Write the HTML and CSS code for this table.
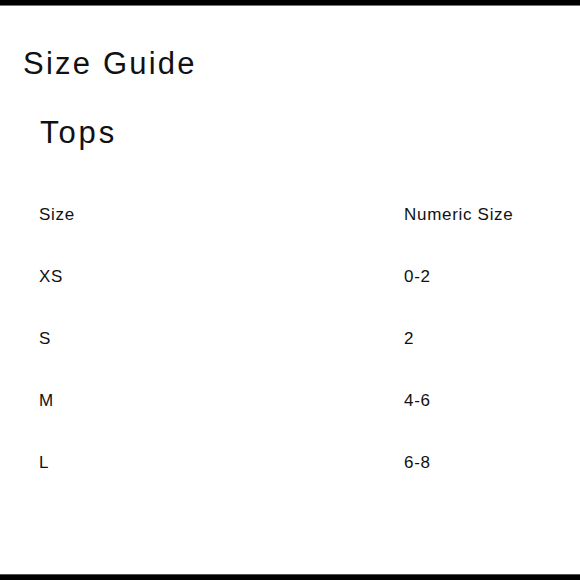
FILE: index.html
```html
<!DOCTYPE html>
<html>
<head>
<meta charset="utf-8">
<link rel="stylesheet" href="styles.css">
</head>
<body>
<div class="frame">
  <div class="bar top"></div>
  <main class="content">
    <h1 class="title">Size Guide</h1>
    <h2 class="section">Tops</h2>
    <div class="table">
      <div class="row"><span class="c1">Size</span><span class="c2">Numeric Size</span></div>
      <div class="row"><span class="c1">XS</span><span class="c2">0-2</span></div>
      <div class="row"><span class="c1">S</span><span class="c2">2</span></div>
      <div class="row"><span class="c1">M</span><span class="c2">4-6</span></div>
      <div class="row"><span class="c1">L</span><span class="c2">6-8</span></div>
    </div>
  </main>
  <div class="bar bottom"></div>
</div>
</body>
</html>
```
FILE: styles.css
```css
html, body { margin: 0; padding: 0; background: #fff; }
body { font-family: "Liberation Sans", Arial, sans-serif; color: #111; }
.frame { width: 580px; height: 580px; display: flex; flex-direction: column; }
.bar { background: #000; flex: none; }
.top { height: 5px; border-bottom: 1px solid #777; }
.bottom { height: 5px; border-top: 1px solid #555; }
.content { flex: 1; padding-left: 23px; }
.title { margin: 0; padding-top: 40px; font-size: 31px; font-weight: 400; line-height: 36px; letter-spacing: 2.2px; }
.section { margin: 0; padding-top: 33px; padding-left: 17px; font-size: 31px; font-weight: 400; line-height: 36px; letter-spacing: 2.9px; }
.table { padding-left: 16px; padding-top: 54px; }
.row { display: flex; height: 62px; font-size: 17px; line-height: 20px; letter-spacing: 0.7px; }
.c1 { width: 365px; }
.c2 { }
```
